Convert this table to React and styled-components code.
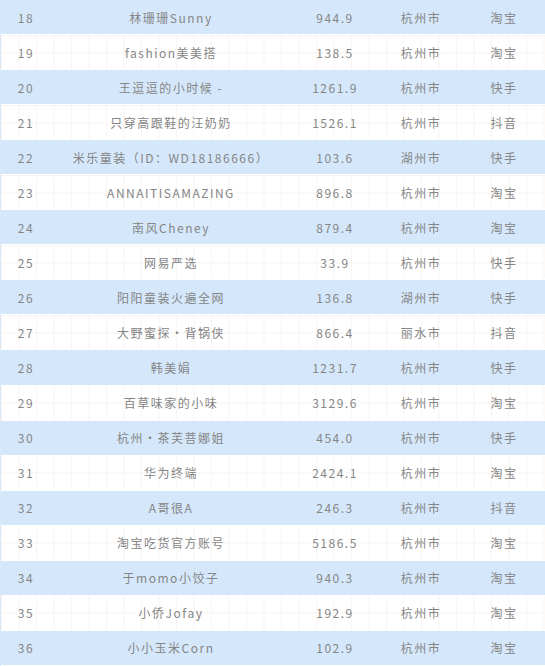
import styled, { createGlobalStyle } from "styled-components";

const rows = [
    [18, "林珊珊Sunny", "944.9", "杭州市", "淘宝"],
    [19, "fashion美美搭", "138.5", "杭州市", "淘宝"],
    [20, "王逗逗的小时候 -", "1261.9", "杭州市", "快手"],
    [21, "只穿高跟鞋的汪奶奶", "1526.1", "杭州市", "抖音"],
    [22, "米乐童装（ID：WD18186666）", "103.6", "湖州市", "快手"],
    [23, "ANNAITISAMAZING", "896.8", "杭州市", "淘宝"],
    [24, "南风Cheney", "879.4", "杭州市", "淘宝"],
    [25, "网易严选", "33.9", "杭州市", "快手"],
    [26, "阳阳童装火遍全网", "136.8", "湖州市", "快手"],
    [27, "大野蜜探·背锅侠", "866.4", "丽水市", "抖音"],
    [28, "韩美娟", "1231.7", "杭州市", "快手"],
    [29, "百草味家的小味", "3129.6", "杭州市", "淘宝"],
    [30, "杭州•茶芙菩娜姐", "454.0", "杭州市", "快手"],
    [31, "华为终端", "2424.1", "杭州市", "淘宝"],
    [32, "A哥很A", "246.3", "杭州市", "抖音"],
    [33, "淘宝吃货官方账号", "5186.5", "杭州市", "淘宝"],
    [34, "于momo小饺子", "940.3", "杭州市", "淘宝"],
    [35, "小侨Jofay", "192.9", "杭州市", "淘宝"],
    [36, "小小玉米Corn", "102.9", "杭州市", "淘宝"],
];

export default function App() {
    return (
        <>
            <GlobalStyle />
            <Table>
                {rows.map((r, i) => (
                    <Row key={r[0]} $blue={i % 2 === 0}>
                        <Cell>{r[0]}</Cell>
                        <Cell>{r[1]}</Cell>
                        <Cell>{r[2]}</Cell>
                        <Cell>{r[3]}</Cell>
                        <Cell>{r[4]}</Cell>
                    </Row>
                ))}
            </Table>
        </>
    );
}

const GlobalStyle = createGlobalStyle`
body {
    margin: 0;
    background: #fff;
}
`;

const Table = styled.div`
width: 545px;
height: 666px;
overflow: hidden;
box-sizing: border-box;
border-left: 1px solid #d9e9f8;
background-color: #fff;
background-image:
    linear-gradient(to right, #f8f4f1 1px, transparent 1px),
    linear-gradient(to bottom, #f8f4f1 1px, transparent 1px);
background-size: 17.5px 17.5px;
font-family: "Noto Sans CJK SC", "Noto Sans", sans-serif;
font-size: 12px;
letter-spacing: 1.5px;
color: #858585;
`;

const Row = styled.div`
height: 35.05px;
display: grid;
grid-template-columns: 50px 240px 88px 84px 1fr;
align-items: center;
box-sizing: border-box;
border-bottom: 1px solid #fff;
background: ${(p) => (p.$blue ? "#d5e8fb" : "transparent")};
`;

const Cell = styled.div`
display: flex;
justify-content: center;
white-space: nowrap;
`;
